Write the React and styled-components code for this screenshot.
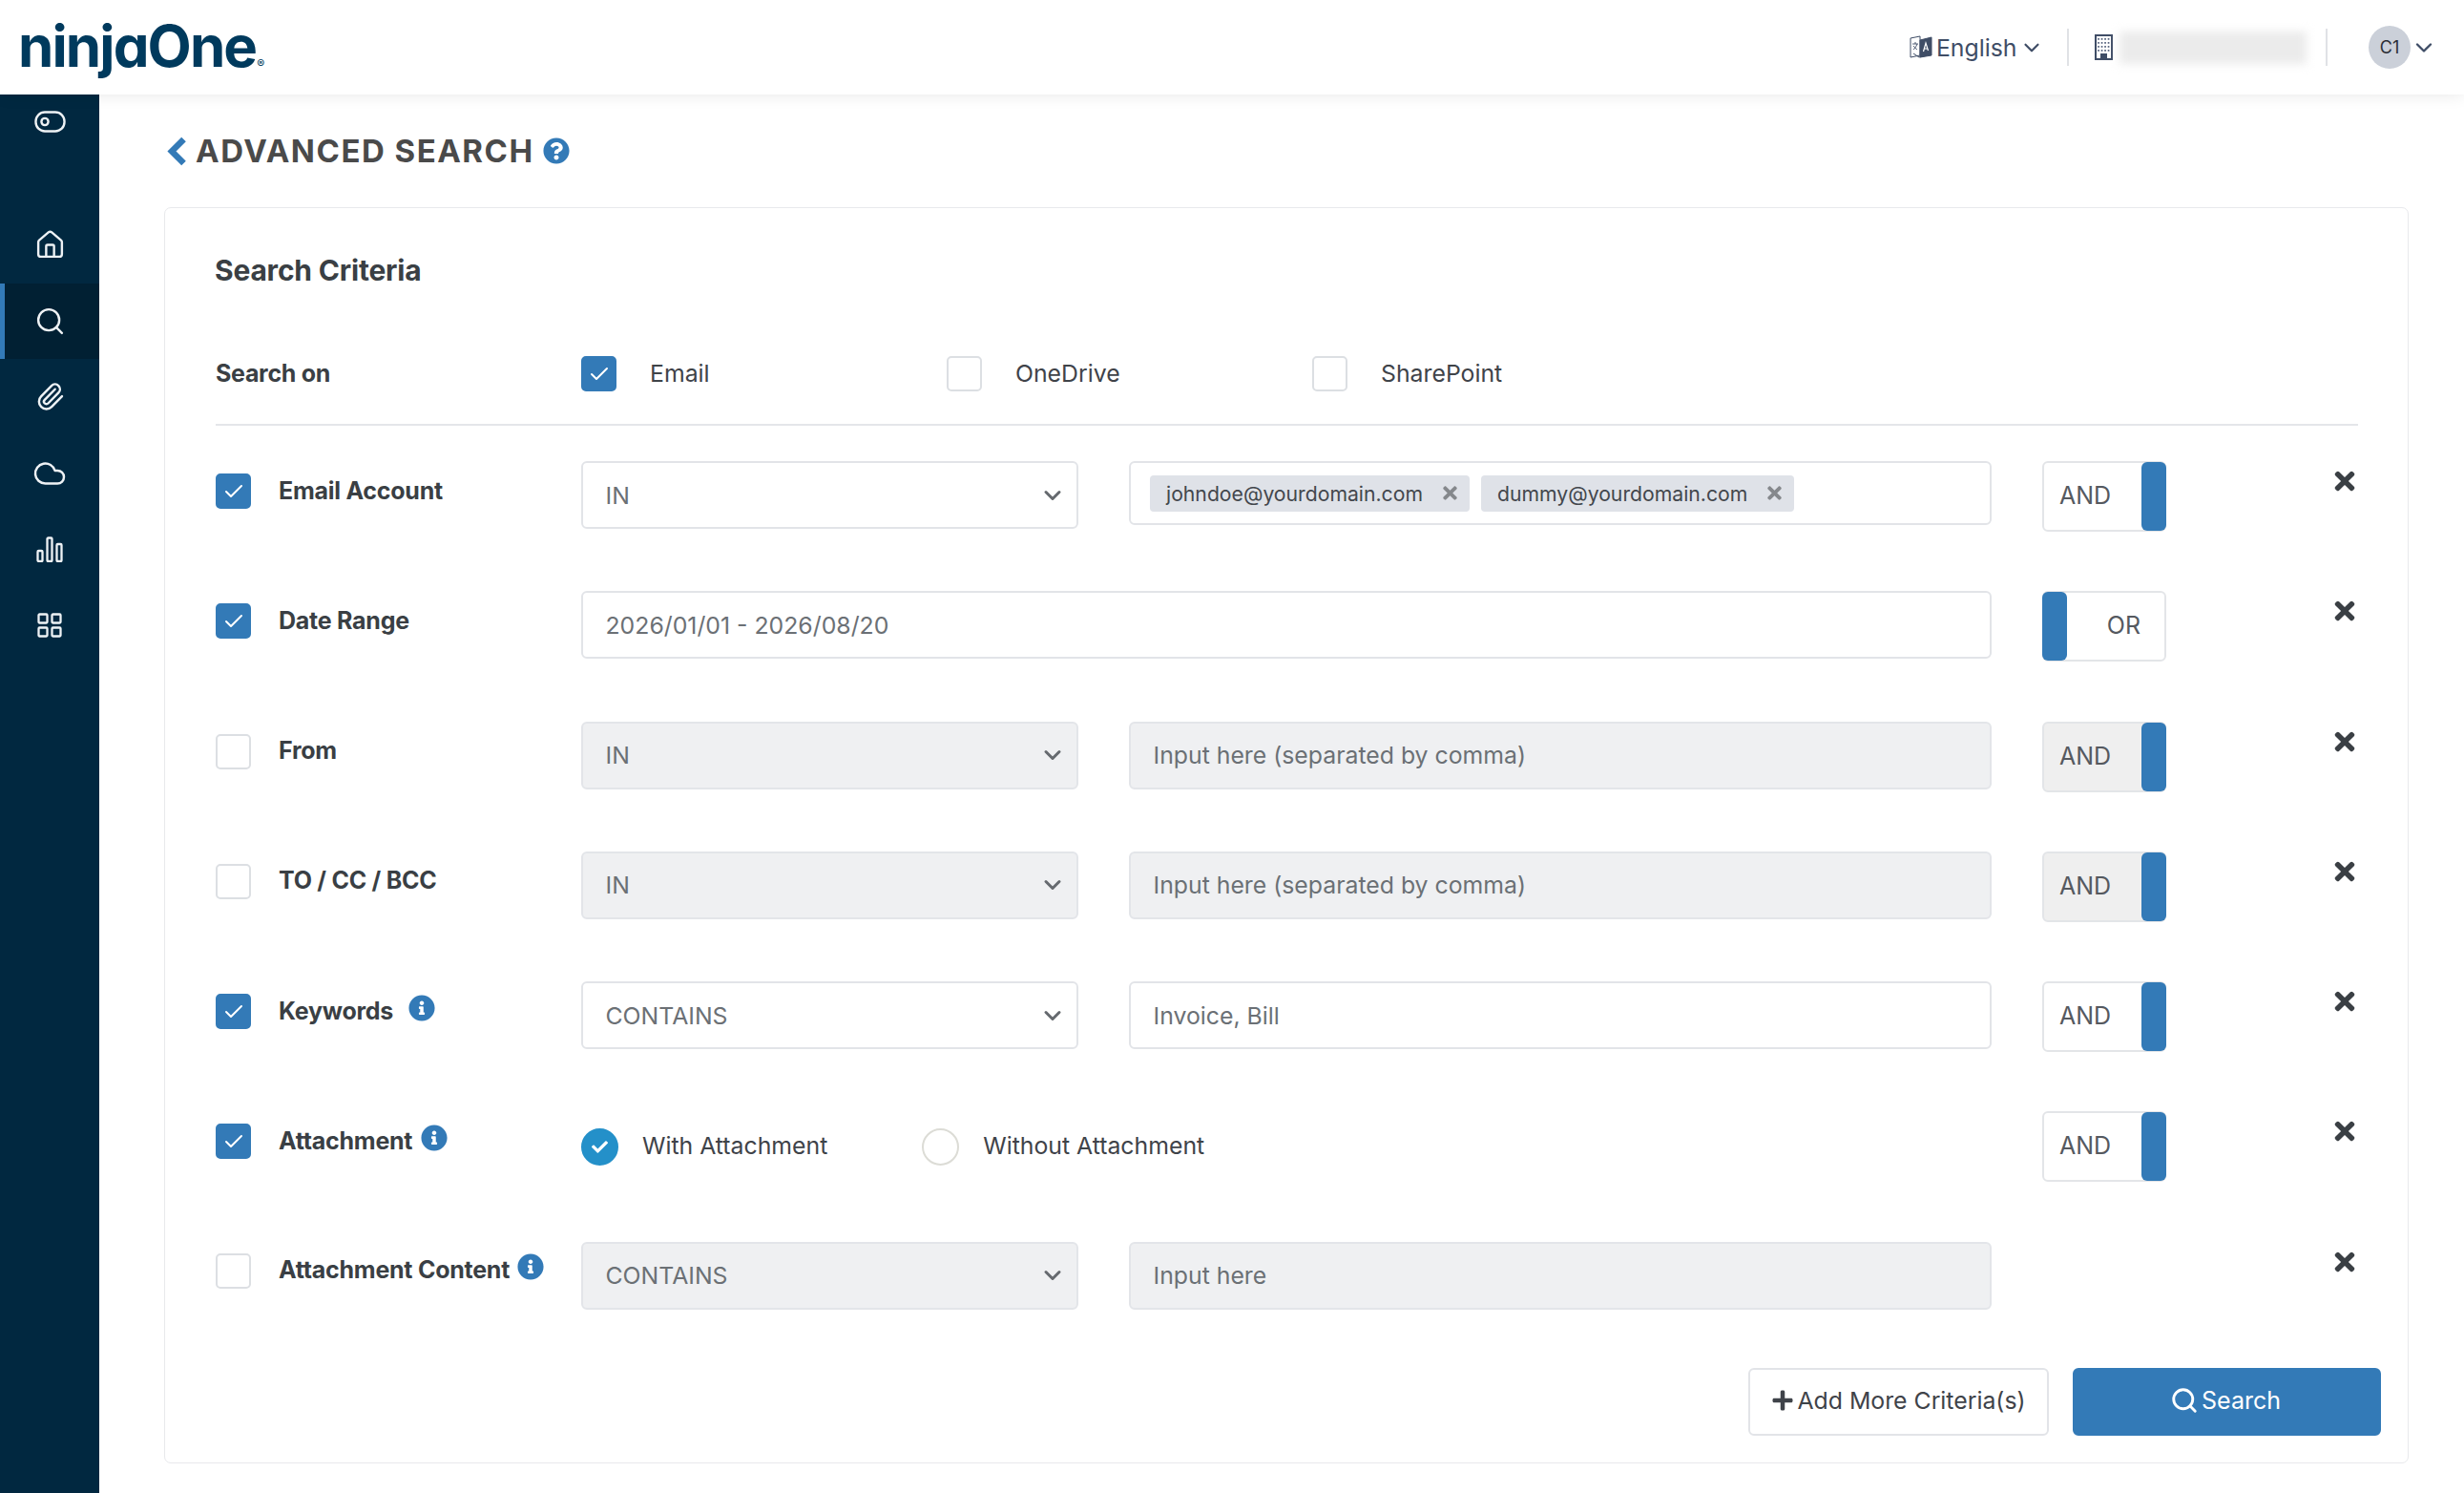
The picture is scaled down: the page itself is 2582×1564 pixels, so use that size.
import React from "react";
import styled, { createGlobalStyle } from "styled-components";
import { Check, ChevronDown, House, Paperclip, Cloud, Search } from "lucide-react";
import { FaQuestionCircle, FaInfoCircle, FaTimes, FaPlus, FaCheck } from "react-icons/fa";

const Global = createGlobalStyle`
  html, body { margin: 0; padding: 0; background: #fff; }
  body { font-family: Inter, "Liberation Sans", sans-serif; color: #374151; }
  * { box-sizing: border-box; }
`;

const Page = styled.div`
  width: 100%;
  height: 100vh;
  overflow: hidden;
  display: flex;
  flex-direction: column;
`;

const Header = styled.header`
  height: 99px;
  flex: none;
  display: flex;
  align-items: center;
  padding: 0 28px 0 19px;
  background: #fff;
  box-shadow: 0 1px 16px rgba(0, 0, 0, 0.09);
  position: relative;
  z-index: 2;
`;

const Logo = styled.div`
  font-family: Inter, sans-serif;
  font-feature-settings: "cv11";
  font-size: 60px;
  font-weight: 700;
  letter-spacing: -1.9px;
  color: #003a5d;
  line-height: 1;
  margin-top: -3px;
  sup {
    font-size: 12px;
    font-weight: 500;
    letter-spacing: 0;
    vertical-align: -1px;
    margin-left: 1px;
  }
`;

const HeaderRight = styled.div`
  margin-left: auto;
  display: flex;
  align-items: center;
`;

const Lang = styled.div`
  display: flex;
  align-items: center;
  gap: 7px;
  font-size: 24.8px;
  color: #3f4d66;
  svg:first-child { margin-right: -3px; }
  svg:last-child { margin-left: -4.5px; }
`;

const VLine = styled.div`
  width: 2px;
  height: 39px;
  background: #e0e2e6;
  margin: 0 ${(p) => p.$after}px 0 ${(p) => p.$before}px;
`;

const Blurred = styled.div`
  width: 196px;
  height: 34px;
  margin-left: 7px;
  background: #ebebeb;
  filter: blur(5px);
`;

const Avatar = styled.div`
  width: 44px;
  height: 45px;
  border-radius: 50%;
  background: #cbd0d9;
  color: #2b2f36;
  font-size: 18px;
  display: flex;
  align-items: center;
  justify-content: center;
`;

const Body = styled.div`
  flex: 1;
  display: flex;
  min-height: 0;
`;

const Sidebar = styled.nav`
  width: 104px;
  flex: none;
  background: #012840;
  padding-top: 17px;
`;

const SideTop = styled.div`
  height: 101px;
  display: flex;
  justify-content: center;
  align-items: flex-start;
  color: #eef2f5;
`;

const SideItem = styled.div`
  height: 79.6px;
  display: flex;
  align-items: center;
  justify-content: center;
  color: #eef2f5;
  background: ${(p) => (p.$active ? "#012033" : "transparent")};
  border-left: 5px solid ${(p) => (p.$active ? "#337ab7" : "transparent")};
  border-right: 5px solid transparent;
  border-right-color: ${(p) => (p.$active ? "#012033" : "transparent")};
`;

const Main = styled.main`
  flex: 1;
  padding: 0 58px 0 68px;
  min-width: 0;
`;

const TitleBar = styled.div`
  height: 118px;
  display: flex;
  align-items: center;
  padding: 0 0 0 3px;
  color: #337ab7;
`;

const Title = styled.h1`
  margin: 0 9px 0 9px;
  font-size: 33px;
  font-weight: 700;
  letter-spacing: 1.5px;
  color: #4a4a4a;
  line-height: 1;
`;

const Card = styled.section`
  height: 1316px;
  border: 1px solid #e8e9ec;
  border-radius: 7px;
  padding: 47px 28px 0 53px;
  background: #fff;
`;

const CardTitle = styled.h2`
  margin: 0 0 0 -1px;
  height: 36px;
  line-height: 36px;
  font-size: 30px;
  font-weight: 700;
  color: #3a3f44;
  letter-spacing: -0.2px;
`;

const SearchOn = styled.div`
  margin: 72px 24px 0 0;
  height: 73px;
  border-bottom: 2px solid #e4e6ea;
  display: grid;
  grid-template-columns: 383px 383px 383px 1fr;
  align-items: start;
`;

const SearchOnLabel = styled.div`
  font-size: 25px;
  font-weight: 700;
  letter-spacing: -0.3px;
  color: #3a3f44;
  padding-top: 3px;
`;

const Option = styled.div`
  display: flex;
  align-items: center;
  gap: 35px;
  font-size: 24.8px;
  color: #3f4349;
  line-height: 34px;
`;

const OptionText = styled.span`
  margin-top: -2px;
`;

const Box = styled.span`
  width: 37px;
  height: 37px;
  flex: none;
  border-radius: 5px;
  display: inline-flex;
  align-items: center;
  justify-content: center;
  background: ${(p) => (p.$on ? "#337ab7" : "#fff")};
  border: 2px solid ${(p) => (p.$on ? "#337ab7" : "#dcdfe3")};
  color: #fff;
`;

const Rows = styled.div`
  margin: 37px 24px 0 0;
  display: flex;
  flex-direction: column;
  gap: 65.3px;
`;

const Row = styled.div`
  height: 71px;
  display: grid;
  grid-template-columns: 330px 521px 904px 130px 1fr;
  column-gap: 53px;
  align-items: start;
`;

const LabelCell = styled.div`
  display: flex;
  align-items: center;
  padding-top: ${(p) => p.$top}px;
`;

const Label = styled.span`
  margin: -2px 0 0 29px;
  font-size: 25px;
  font-weight: 700;
  color: #3a3f44;
  white-space: nowrap;
  letter-spacing: -0.25px;
`;

const InfoTip = styled.span`
  display: inline-flex;
  margin: -8px 0 0 ${(p) => p.$gap}px;
  color: #337ab7;
`;

const Field = styled.div`
  height: ${(p) => p.$h || 71}px;
  display: flex;
  align-items: center;
  padding: 0 11px 0 23.5px;
  font-size: 24.8px;
  color: #6b7075;
  border: 2px solid ${(p) => (p.$off ? "#e3e5e9" : "#e2e4e8")};
  border-radius: 6px;
  background: ${(p) => (p.$off ? "#eff0f2" : "#fff")};
  grid-column: ${(p) => p.$span || "auto"};
  white-space: nowrap;
  svg { margin-left: auto; color: #666a6f; }
`;

const TagField = styled(Field)`
  padding: 0 0 0 20px;
  gap: 12px;
`;

const Tag = styled.span`
  height: 38px;
  display: inline-flex;
  align-items: center;
  padding: 0 10px 0 17px;
  border-radius: 4px;
  background: #dfe2e8;
  font-size: 21.2px;
  color: #43474d;
  svg { margin-left: 18px; color: #85888c; }
`;

const Toggle = styled.div`
  height: 74px;
  width: 130px;
  display: flex;
  flex-direction: ${(p) => (p.$or ? "row-reverse" : "row")};
  justify-content: space-between;
  align-items: center;
  border: 2px solid #e3e5e8;
  border-radius: 6px;
  background: ${(p) => (p.$off ? "#efefef" : "#fff")};
  font-size: 25px;
  color: #55595f;
`;

const ToggleText = styled.span`
  margin-top: -2px;
  padding: ${(p) => (p.$or ? "0 25px 0 0" : "0 0 0 16px")};
`;

const Knob = styled.span`
  width: 26px;
  height: 72px;
  background: #337ab7;
  border-radius: 6px;
  margin: ${(p) => (p.$or ? "-1px 0 -1px -2px" : "-1px -2px -1px 0")};
`;

const RadioGroup = styled.div`
  grid-column: 2 / span 2;
  height: 74px;
  display: flex;
  align-items: center;
  font-size: 24.8px;
  color: #3f4349;
`;

const Radio = styled.span`
  width: 39px;
  height: 39px;
  flex: none;
  border-radius: 50%;
  display: inline-flex;
  align-items: center;
  justify-content: center;
  background: ${(p) => (p.$on ? "#2490c9" : "#fff")};
  border: 2px solid ${(p) => (p.$on ? "#2490c9" : "#dcdcd6")};
  color: #fff;
`;

const RadioText = styled.span`
  margin: -2px ${(p) => p.$after}px 0 25px;
`;

const CloseCell = styled.div`
  grid-column: 5;
  justify-self: end;
  margin: 6px -1px 0 0;
  display: flex;
  color: #3a3f44;
`;

const Footer = styled.div`
  margin-top: 61px;
  display: flex;
  justify-content: flex-end;
  gap: 25px;
`;

const Button = styled.button`
  height: 71px;
  width: ${(p) => p.$w}px;
  padding: 0 ${(p) => (p.$primary ? 3 : 0)}px 2px 0;
  border-radius: 6px;
  font-family: inherit;
  font-size: ${(p) => (p.$primary ? 25 : 24.8)}px;
  display: flex;
  align-items: center;
  justify-content: center;
  gap: 3px;
  background: ${(p) => (p.$primary ? "#337ab7" : "#fff")};
  color: ${(p) => (p.$primary ? "#fff" : "#3f4349")};
  border: 2px solid ${(p) => (p.$primary ? "#337ab7" : "#e2e4e8")};
`;

const BackIcon = () => (
  <svg width="21" height="31" viewBox="0 0 21 31" fill="none" stroke="currentColor" strokeWidth="6.5">
    <path d="M17.5 3L5 15.5 17.5 28" />
  </svg>
);

const TranslateIcon = () => (
  <svg width="24" height="27" viewBox="0 0 24 27" fill="none" stroke="#3f4d66" strokeWidth="1">
    <path d="M1 4l10 -2v20l-10 2z" />
    <path d="M11 6l12 -3v19l-12 2z" fill="#3f4d66" />
    <path d="M4 20l6 4 8 -2" />
    <path d="M3 10h6M6 8v2M8 10c-1 3-3 5-4 6M4 12c1 2 3 3 4 4" strokeWidth="0.9" />
    <path d="M14.5 18l2.5 -9 2.5 8M15.5 15h3" stroke="#fff" strokeWidth="1.2" />
  </svg>
);

const BuildingIcon = () => (
  <svg width="19" height="27" viewBox="0 0 19 27">
    <rect x="1" y="1" width="17" height="25" fill="#fff" stroke="#3f4d66" strokeWidth="2" />
    {[4, 8, 12, 16].map((y) =>
      [4, 7.5, 11, 14.5].map((x) => <rect key={`${x}-${y}`} x={x - 0.8} y={y} width="1.7" height="1.8" fill="#5a6780" />)
    )}
    <rect x="6" y="20" width="7" height="6" fill="#3f4d66" />
  </svg>
);

const ToggleIcon = () => (
  <svg width="33" height="23" viewBox="0 0 33 23" fill="none" stroke="currentColor" strokeWidth="2.4">
    <rect x="1.5" y="1.5" width="30" height="20" rx="9.5" />
    <circle cx="11" cy="11.5" r="3.6" />
  </svg>
);

const ChartIcon = () => (
  <svg width="28" height="27" viewBox="0 0 28 27" fill="none" stroke="currentColor" strokeWidth="2.3">
    <rect x="1.5" y="15" width="5" height="11" rx="1" />
    <rect x="11.5" y="1.5" width="5" height="24.5" rx="1" />
    <rect x="21.5" y="8" width="5" height="18" rx="1" />
  </svg>
);

const GridIcon = () => (
  <svg width="26" height="26" viewBox="0 0 26 26" fill="none" stroke="currentColor" strokeWidth="2.3">
    <rect x="1.5" y="1.5" width="9" height="9" rx="1" />
    <rect x="15.5" y="1.5" width="9" height="9" rx="1" />
    <rect x="1.5" y="15.5" width="9" height="9" rx="1" />
    <rect x="15.5" y="15.5" width="9" height="9" rx="1" />
  </svg>
);

const CheckBox = ({ on }) => <Box $on={on}>{on && <Check size={24} strokeWidth={2} />}</Box>;

const Info = ({ gap }) => (
  <InfoTip $gap={gap}>
    <FaInfoCircle size={28} />
  </InfoTip>
);

const AndOr = ({ or, off }) => (
  <Toggle $or={or} $off={off}>
    <ToggleText $or={or}>{or ? "OR" : "AND"}</ToggleText>
    <Knob $or={or} />
  </Toggle>
);

const Close = () => (
  <CloseCell>
    <FaTimes size={30} />
  </CloseCell>
);

const Select = ({ value, off }) => (
  <Field $off={off}>
    {value}
    <ChevronDown size={28} strokeWidth={2.6} />
  </Field>
);

export default function App() {
  return (
    <Page>
      <Global />
      <Header>
        <Logo>
          ninjaOne<sup>®</sup>
        </Logo>
        <HeaderRight>
          <Lang>
            <TranslateIcon />
            English
            <ChevronDown size={26} strokeWidth={2} />
          </Lang>
          <VLine $before={24} $after={27} />
          <BuildingIcon />
          <Blurred />
          <VLine $before={20} $after={43} />
          <Avatar>C1</Avatar>
          <ChevronDown size={28} strokeWidth={2} color="#3f4d66" />
        </HeaderRight>
      </Header>
      <Body>
        <Sidebar>
          <SideTop>
            <ToggleIcon />
          </SideTop>
          <SideItem>
            <House size={33} strokeWidth={1.75} />
          </SideItem>
          <SideItem $active>
            <Search size={33} strokeWidth={1.75} />
          </SideItem>
          <SideItem>
            <Paperclip size={31} strokeWidth={1.9} />
          </SideItem>
          <SideItem>
            <Cloud size={36} strokeWidth={1.65} />
          </SideItem>
          <SideItem>
            <ChartIcon />
          </SideItem>
          <SideItem>
            <GridIcon />
          </SideItem>
        </Sidebar>
        <Main>
          <TitleBar>
            <BackIcon />
            <Title>ADVANCED SEARCH</Title>
            <FaQuestionCircle size={28} />
          </TitleBar>
          <Card>
            <CardTitle>Search Criteria</CardTitle>
            <SearchOn>
              <SearchOnLabel>Search on</SearchOnLabel>
              <Option>
                <CheckBox on />
                <OptionText>Email</OptionText>
              </Option>
              <Option>
                <CheckBox />
                <OptionText>OneDrive</OptionText>
              </Option>
              <Option>
                <CheckBox />
                <OptionText>SharePoint</OptionText>
              </Option>
            </SearchOn>
            <Rows>
              <Row>
                <LabelCell $top={13}>
                  <CheckBox on />
                  <Label>Email Account</Label>
                </LabelCell>
                <Select value="IN" />
                <TagField $h={67}>
                  <Tag>
                    johndoe@yourdomain.com
                    <FaTimes size={21} />
                  </Tag>
                  <Tag>
                    dummy@yourdomain.com
                    <FaTimes size={21} />
                  </Tag>
                </TagField>
                <AndOr />
                <Close />
              </Row>
              <Row>
                <LabelCell $top={13}>
                  <CheckBox on />
                  <Label>Date Range</Label>
                </LabelCell>
                <Field $span="2 / span 2">2026/01/01 - 2026/08/20</Field>
                <AndOr or />
                <Close />
              </Row>
              <Row>
                <LabelCell $top={13}>
                  <CheckBox />
                  <Label>From</Label>
                </LabelCell>
                <Select value="IN" off />
                <Field $off>Input here (separated by comma)</Field>
                <AndOr off />
                <Close />
              </Row>
              <Row>
                <LabelCell $top={13}>
                  <CheckBox />
                  <Label>TO / CC / BCC</Label>
                </LabelCell>
                <Select value="IN" off />
                <Field $off>Input here (separated by comma)</Field>
                <AndOr off />
                <Close />
              </Row>
              <Row>
                <LabelCell $top={13}>
                  <CheckBox on />
                  <Label>Keywords</Label>
                  <Info gap={16} />
                </LabelCell>
                <Select value="CONTAINS" />
                <Field>Invoice, Bill</Field>
                <AndOr />
                <Close />
              </Row>
              <Row>
                <LabelCell $top={13}>
                  <CheckBox on />
                  <Label>Attachment</Label>
                  <Info gap={9} />
                </LabelCell>
                <RadioGroup>
                  <Radio $on>
                    <FaCheck size={17} />
                  </Radio>
                  <RadioText $after={99}>With Attachment</RadioText>
                  <Radio />
                  <RadioText $after={0}>Without Attachment</RadioText>
                </RadioGroup>
                <AndOr />
                <Close />
              </Row>
              <Row>
                <LabelCell $top={12}>
                  <CheckBox />
                  <Label>Attachment Content</Label>
                  <Info gap={8} />
                </LabelCell>
                <Select value="CONTAINS" off />
                <Field $off>Input here</Field>
                <Close />
              </Row>
            </Rows>
            <Footer>
              <Button $w={315}>
                <FaPlus size={24} />
                Add More Criteria(s)
              </Button>
              <Button $primary $w={323}>
                <Search size={30} strokeWidth={2.3} />
                Search
              </Button>
            </Footer>
          </Card>
        </Main>
      </Body>
    </Page>
  );
}
